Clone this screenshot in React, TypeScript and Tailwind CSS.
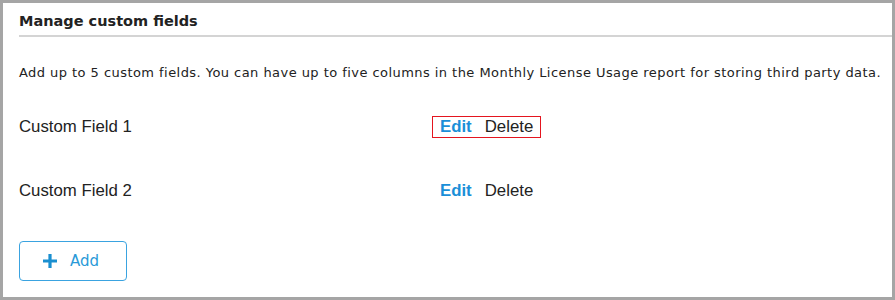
import React from 'react';

const fields = ['Custom Field 1', 'Custom Field 2'];

export default function App() {
  return (
    <div className="w-[895px] h-[300px] bg-white border-[3px] border-[#a5a5a5] overflow-hidden">
      <div className="ml-[16px]">
        <div className="h-[34px] pt-[8px] border-b-2 border-[#d4d4d4] font-['DejaVu_Sans',sans-serif] font-bold text-[14.5px] text-[#222]">
          Manage custom fields
        </div>
      </div>
      <div className="px-[16px]">
        <p className="mt-[27px] font-['DejaVu_Sans',sans-serif] text-[13px] tracking-[0.45px] text-[#222] leading-[17px] whitespace-nowrap">
          Add up to 5 custom fields. You can have up to five columns in the Monthly License Usage report for storing third party data.
        </p>
        {fields.map((f, i) => (
          <div key={f} className={`flex items-center h-[24px] ${i === 0 ? 'mt-[34px]' : 'mt-[40px]'} font-['Liberation_Sans',sans-serif] text-[16.8px] text-[#222]`}>
            <span className="w-[413px]">{f}</span>
            <div className={`flex items-center gap-[13px] h-[22px] px-[7px] ${i === 0 ? 'border border-[#e4151f]' : 'border border-transparent'}`}>
              <span className="font-bold text-[#1a8fd8]">Edit</span>
              <span>Delete</span>
            </div>
          </div>
        ))}
        <button className="mt-[38px] flex items-center gap-[12px] w-[108px] h-[40px] pl-[22px] border border-[#3aa3e0] rounded-[4px] text-[#2a9ad8] font-['DejaVu_Sans',sans-serif] text-[15px]">
          <svg width="16" height="16" viewBox="0 0 16 16">
            <path d="M8 1v14M1 8h14" stroke="#1a8fd0" strokeWidth="3.2" />
          </svg>
          Add
        </button>
      </div>
    </div>
  );
}
